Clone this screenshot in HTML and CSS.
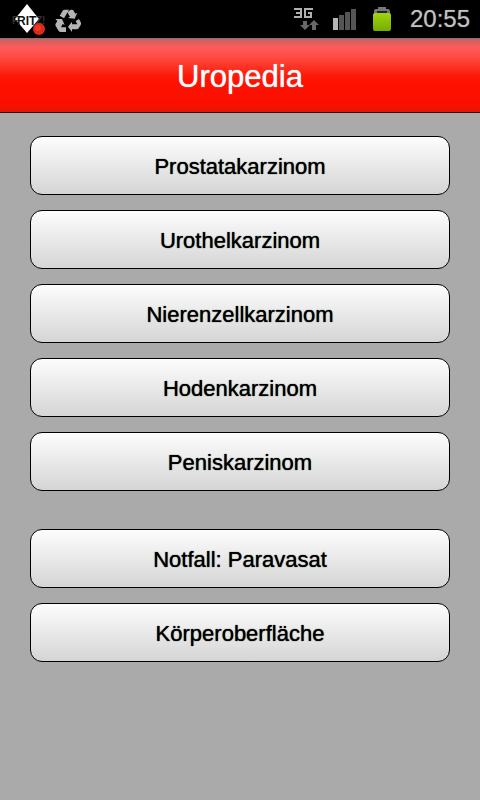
FILE: index.html
```html
<!DOCTYPE html>
<html lang="de">
<head>
<meta charset="utf-8">
<meta name="viewport" content="width=device-width, initial-scale=1">
<title>Uropedia</title>
<link rel="stylesheet" href="styles.css">
</head>
<body>
<div class="status">
  <div class="status-group">
    <svg class="icon-fritz" viewBox="0 0 34 32" aria-hidden="true">
      <path d="M15 1 27 16 15 30 3 16z" fill="#fff"/>
      <text class="fritz-side" x="0" y="21">F</text>
      <text class="fritz-text" x="5" y="22">RIT</text>
      <text class="fritz-side" x="24" y="21">Z!</text>
      <circle cx="27" cy="26" r="6" fill="#dc2a18"/>
      <circle cx="26" cy="25" r="3" fill="#e83c28"/>
    </svg>
    <svg class="icon-recycle" viewBox="160 24 84 72" aria-hidden="true">
      <g fill="#b4b4b4">
        <path d="M177 44 187 28Q189 26 192 26H205L190 52z"/>
        <path d="M210 26H214Q217 26 219 29L224 38 230 35 222 53 202 51 208 47 200 34z"/>
        <path d="M225 60 235 54 241 65Q242 68 240 72L234 82Q232 85 228 85H214V93L202 77 214 62V70H230z"/>
        <path d="M164 54H184L192 72 186 69 181 79H196V93H180Q176 93 174 90L165 75Q163 71 165 68L170 60z"/>
      </g>
    </svg>
  </div>
  <div class="status-group status-right">
    <svg class="icon-network" viewBox="0 0 26 24" aria-hidden="true">
      <path d="M0 2H7V10H0M2 6H7M18 3V2H11V10H17V6H14" fill="none" stroke="#b0b0b0" stroke-width="2"/>
      <path d="M9 14H13V18H16L11 23 6 18H9zM18 23H22V18H25L20 13 15 18H18z" fill="#686868"/>
    </svg>
    <svg class="icon-signal" viewBox="0 0 24 22" aria-hidden="true">
      <path d="M0 10H5V22H0z" fill="#b5b5b5"/>
      <path d="M6 7H11V22H6zM12 4H17V22H12zM18 1H23V22H18z" fill="#555"/>
    </svg>
    <svg class="icon-battery" viewBox="0 0 18 24" aria-hidden="true">
      <defs>
        <linearGradient id="charge" x2="0" y2="1">
          <stop offset="0" stop-color="#a0d410"/>
          <stop offset="1" stop-color="#76ac00"/>
        </linearGradient>
      </defs>
      <path d="M1 7V4Q1 2 3 2H5V0H13V2H15Q17 2 17 4V7z" fill="#777"/>
      <path d="M4 4H14V6H4z" fill="#222"/>
      <rect y="6" width="18" height="18" rx="2" fill="url(#charge)"/>
    </svg>
    <time class="clock">20:55</time>
  </div>
</div>
<header class="titlebar"><h1>Uropedia</h1></header>
<main class="menu">
  <nav class="menu-group">
    <button type="button">Prostatakarzinom</button>
    <button type="button">Urothelkarzinom</button>
    <button type="button">Nierenzellkarzinom</button>
    <button type="button">Hodenkarzinom</button>
    <button type="button">Peniskarzinom</button>
  </nav>
  <nav class="menu-group">
    <button type="button">Notfall: Paravasat</button>
    <button type="button">Körperoberfläche</button>
  </nav>
</main>
</body>
</html>
```
FILE: styles.css
```css
* {
  box-sizing: border-box;
}

body {
  margin: 0;
  min-height: 100vh;
  background: #aaa;
  font-family: "Liberation Sans", Arial, sans-serif;
}

.status {
  display: flex;
  justify-content: space-between;
  height: 38px;
  padding: 0 10px 0 12px;
  background: #000;
}

.status-group {
  display: flex;
  align-items: center;
}

.status-group svg {
  display: block;
}

.icon-fritz {
  width: 34px;
  height: 32px;
}

.fritz-text {
  font-size: 12px;
  font-weight: bold;
  fill: #111;
}

.fritz-side {
  font-size: 10px;
  font-weight: bold;
  fill: #333;
}

.icon-recycle {
  width: 28px;
  height: 24px;
  margin: 3px 0 0 8px;
}

.icon-network {
  width: 26px;
  height: 24px;
}

.icon-signal {
  width: 24px;
  height: 22px;
  margin-left: 13px;
}

.icon-battery {
  width: 18px;
  height: 24px;
  margin-left: 16px;
}

.clock {
  margin-left: 19px;
  color: #c0c0c0;
  font-size: 24px;
  line-height: 38px;
  text-shadow: 0 0 1px #777;
}

.titlebar {
  height: 75px;
  border-top: 1px solid #777;
  border-bottom: 1px solid #300;
  background: linear-gradient(#cc6060, #ff5a5a 12%, #ff4b43 25%, #fb1b08 50%, #ff1000 60%, #fa1000 92%, #e01808);
}

h1 {
  margin: 0;
  color: #fff;
  font-size: 31px;
  font-weight: normal;
  line-height: 75px;
  text-align: center;
  text-shadow: 0 0 1px #fff;
}

.menu {
  display: grid;
  gap: 38px;
  padding: 23px 30px;
}

.menu-group {
  display: grid;
  gap: 15px;
}

button {
  height: 59px;
  padding: 3px 0 0;
  border: 1px solid #000;
  border-radius: 12px;
  background: linear-gradient(#fdfdfd, #d5d5d5);
  color: #000;
  font-family: inherit;
  font-size: 22px;
  text-shadow: 0 0 1px #000;
}
```
